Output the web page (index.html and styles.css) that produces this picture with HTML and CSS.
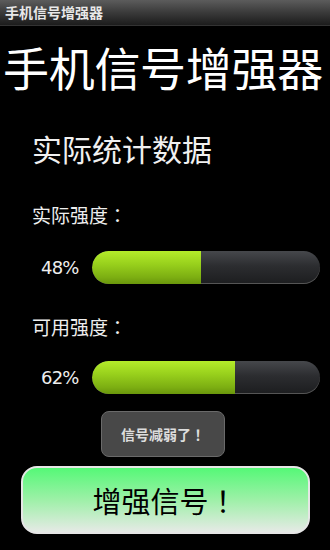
FILE: index.html
```html
<!DOCTYPE html>
<html>
<head>
<meta charset="utf-8">
<link rel="stylesheet" href="styles.css">
</head>
<body>
<div class="screen">
  <div class="titlebar">手机信号增强器</div>
  <h1 class="headline">手机信号增强器</h1>
  <h2 class="section">实际统计数据</h2>
  <div class="label">实际强度<span class="punct">：</span></div>
  <div class="row">
    <span class="pct">48%</span>
    <div class="bar"><div class="fill" style="width:48%"></div></div>
  </div>
  <div class="label label2">可用强度<span class="punct">：</span></div>
  <div class="row row2">
    <span class="pct">62%</span>
    <div class="bar"><div class="fill" style="width:62.5%"></div></div>
  </div>
  <div class="toast-wrap"><div class="toast">信号减弱了<span class="punct">！</span></div></div>
  <div class="btn-wrap"><button class="boost">增强信号<span class="punct">！</span></button></div>
</div>
</body>
</html>
```
FILE: styles.css
```css
* { box-sizing: border-box; }
html, body { margin: 0; padding: 0; background: #000; }
body {
  width: 330px; height: 550px; overflow: hidden;
  font-family: "Noto Sans CJK SC", "DejaVu Sans", sans-serif;
  color: #fff;
}
.screen { display: flex; flex-direction: column; width: 330px; height: 550px; }
.punct { font-family: "Noto Sans CJK TC", sans-serif; }
.titlebar {
  height: 26px;
  background: linear-gradient(#5c5c5c, #3a3a3a 50%, #1c1c1c);
  border-bottom: 1px solid #333;
  color: #e8e8e8;
  font-size: 14px;
  line-height: 24px;
  padding-left: 5px;
  font-weight: bold;
}
.headline {
  margin: 8px 0 0 0;
  font-size: 46px;
  font-weight: normal;
  line-height: 64px;
  padding-left: 3px;
  letter-spacing: -0.3px;
  white-space: nowrap;
}
.section {
  margin: 30px 0 0 0;
  font-size: 30px;
  font-weight: normal;
  line-height: 40px;
  padding-left: 32px;
  color: #f0f0f0;
}
.label {
  margin-top: 33px;
  font-size: 19px;
  line-height: 28px;
  padding-left: 32px;
  color: #eee;
}
.label2 { margin-top: 29px; }
.row {
  display: flex; align-items: center;
  margin-top: 22px;
  padding-left: 41px;
}
.row2 { margin-top: 20px; }
.pct {
  width: 51px;
  font-family: "DejaVu Sans", sans-serif;
  font-size: 18px;
  color: #eee;
  letter-spacing: -0.8px;
}
.bar {
  width: 228px; height: 33px;
  border-radius: 17px;
  background: linear-gradient(#46484c, #2c2d30 45%, #1c1d1f);
  overflow: hidden;
  box-shadow: inset 0 -1px 0 #555;
}
.fill {
  height: 100%;
  background: linear-gradient(#b4ec2a, #98d01c 40%, #7cae12 80%, #6a960c);
  border-radius: 17px 0 0 17px;
}
.toast-wrap { display: flex; justify-content: center; margin-top: 17px; padding-right: 4px; }
.toast {
  width: 124px; height: 46px;
  background: #484848;
  border: 1px solid #6a6a6a;
  border-radius: 8px;
  color: #ddd;
  font-size: 14px;
  font-weight: bold;
  display: flex; align-items: center; justify-content: center;
}
.btn-wrap { display: flex; justify-content: center; margin-top: 9px; }
.boost {
  width: 289px; height: 68px;
  border: 2px solid #e6e6e6;
  border-radius: 16px;
  background: linear-gradient(#55f877, #9ef0a8 50%, #e6eae6);
  color: #000;
  font-family: "Noto Sans CJK SC", sans-serif;
  font-size: 29px;
  padding: 0;
}
```
